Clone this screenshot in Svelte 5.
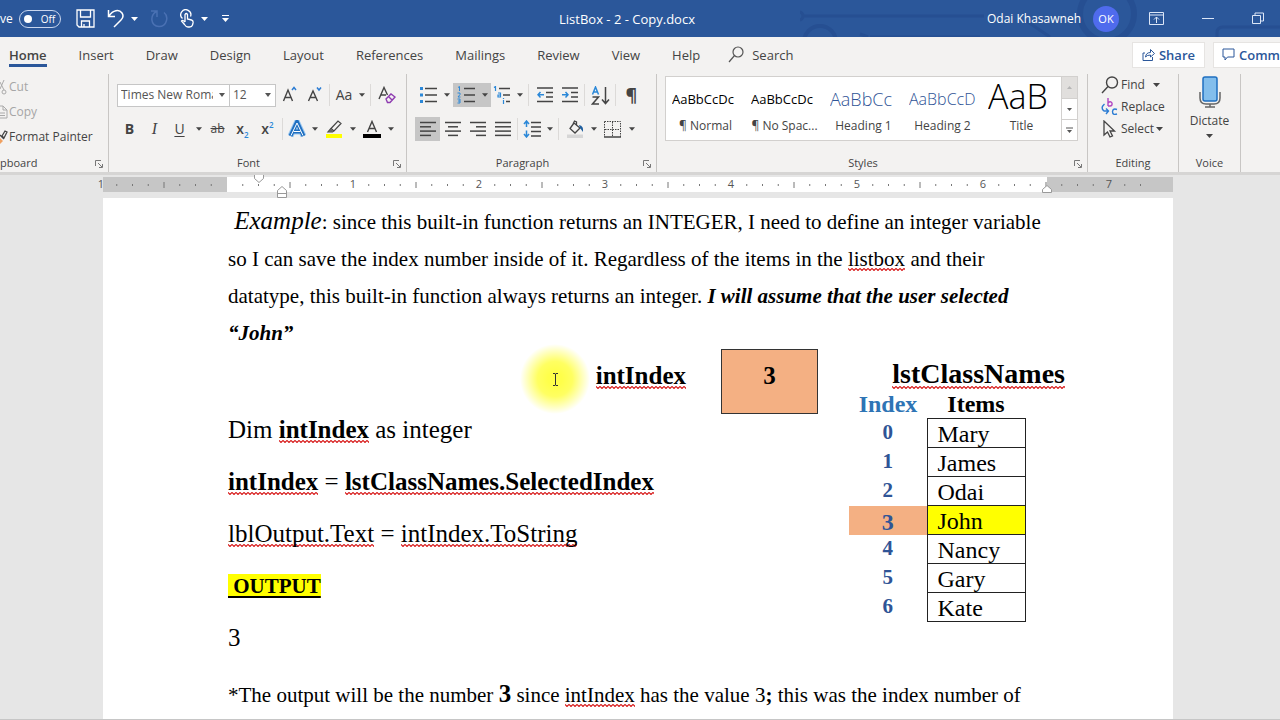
<script lang="ts">
  const tabs = ['Home', 'Insert', 'Draw', 'Design', 'Layout', 'References', 'Mailings', 'Review', 'View', 'Help'];

  const styles = [
    { sample: 'AaBbCcDc', label: '¶ Normal', kind: 'body' },
    { sample: 'AaBbCcDc', label: '¶ No Spac...', kind: 'body' },
    { sample: 'AaBbCc', label: 'Heading 1', kind: 'h1' },
    { sample: 'AaBbCcD', label: 'Heading 2', kind: 'h2' },
    { sample: 'AaB', label: 'Title', kind: 'title' }
  ];

  const names = ['Mary', 'James', 'Odai', 'John', 'Nancy', 'Gary', 'Kate'];
  const picked = 3;

  let activeTab = $state('Home');
  let autoSave = $state(false);

  // ruler: 126 units per inch, eight ticks per inch, zero at the left margin
  const inch = 126;
  const zero = 124;
  const marks = Array.from({ length: 66 }, (_, i) => i - 7).map((n) => ({
    n,
    x: zero + (n * inch) / 8
  }));
</script>

{#snippet caret()}
  <svg class="caret" width="7" height="4" viewBox="0 0 7 4" aria-hidden="true"><path d="M0 0h7L3.500 4z" fill="currentColor" /></svg>
{/snippet}

{#snippet menu(label: string)}
  <button type="button" class="drop" aria-label={label}>{@render caret()}</button>
{/snippet}

{#snippet lines(rows: number[][])}
  <svg width="18" height="16" viewBox="0 0 18 16" aria-hidden="true">
    {#each rows as [from, to], i}
      <path d="M{from} {1.5 + i * 4.300}H{to}" stroke="#444" stroke-width="1.500" />
    {/each}
  </svg>
{/snippet}

{#snippet caption(text: string, launcher: boolean)}
  <div class="caption" class:launches={launcher}>
    <span>{text}</span>
    {#if launcher}
      <button type="button" class="launcher" aria-label="{text} settings">
        <svg width="8" height="8" viewBox="0 0 8 8" fill="none" stroke="#777"><path d="M.5 6V.5H6M3 3l4 4M7.500 4v3.500H4" /></svg>
      </button>
    {/if}
  </div>
{/snippet}

<div class="app">
  <header class="titlebar">
    <svg class="circuit" width="480" height="37" viewBox="0 0 480 37" fill="none" stroke="#264f92" stroke-width="3" aria-hidden="true">
      <circle cx="-1" cy="16" r="4" /><path d="M4 16h180M70 37h110M60 34l8 3M225 20l25 17" />
      <circle cx="20" cy="42" r="16" stroke-width="4" />
      <circle cx="307" cy="14" r="27" stroke-width="6" />
      <path d="M417 37v-4q0-6 6-6h57" />
    </svg>
    <div class="quick">
      <label class="autosave">
        <span>ve</span>
        <input type="checkbox" bind:checked={autoSave} />
        <span class="toggle"><i></i>{autoSave ? 'On' : 'Off'}</span>
      </label>
      <button type="button" aria-label="Save">
        <svg width="19" height="19" viewBox="0 0 19 19" fill="none" stroke="#fff" stroke-width="1.300"><path d="M1 1h17v17H3l-2-2zM4.500 1v7h10V1M5.500 18v-6h8v6M8 18v-3" /></svg>
      </button>
      <button type="button" aria-label="Undo">
        <svg width="18" height="19" viewBox="0 0 18 19" fill="none" stroke="#fff" stroke-width="1.500"><path d="M1.500 1v6.500H8M2 7C6 1 12 0 15 4c2 3 1 5-1 7l-7 7" /></svg>
      </button>
      <button type="button" class="thin" aria-label="Undo history">{@render caret()}</button>
      <button type="button" aria-label="Redo">
        <svg width="18" height="19" viewBox="0 0 18 19" fill="none" stroke="#4a71b3" stroke-width="1.500"><path d="M1 2h6v6M6.500 2.500C0 6 0 17 9 17.500c8 0 10-10 5-14" /></svg>
      </button>
      <button type="button" aria-label="Touch mode">
        <svg width="15" height="19" viewBox="0 0 15 19" fill="none" stroke="#fff" stroke-width="1.300"><path d="M2.500 9.500A5 5 0 1 1 10.500 7.500M5 13V5.500q1.300-2 2.500 0V10l4 1q2 .5 1.500 3l-.5 2q-.5 2-3 2H8q-2 0-3.500-2.500L1.500 12q1-1.500 3.500 1" /></svg>
      </button>
      <button type="button" class="thin" aria-label="Touch mode options">{@render caret()}</button>
      <button type="button" class="more" aria-label="Customize toolbar">
        <svg width="7" height="7" viewBox="0 0 7 7"><path d="M0 .5h7" stroke="#fff" /><path d="M0 3h7L3.500 7z" fill="#fff" /></svg>
      </button>
    </div>
    <h1>ListBox - 2 - Copy.docx</h1>
    <div class="account">
      <span>Odai Khasawneh</span>
      <span class="avatar">OK</span>
      <button type="button" aria-label="Ribbon display options">
        <svg width="15" height="13" viewBox="0 0 15 13" fill="none" stroke="#dce6f7"><path d="M.5.5h14v12H.5zM.5 3h14M7.500 11V5M5 7.500L7.500 5 10 7.500" /></svg>
      </button>
      <button type="button" aria-label="Minimize">
        <svg width="12" height="13" viewBox="0 0 12 13" stroke="#dce6f7"><path d="M0 6.500h12" /></svg>
      </button>
      <button type="button" aria-label="Restore">
        <svg width="12" height="13" viewBox="0 0 12 13" fill="none" stroke="#dce6f7"><path d="M.5 3.500h8v8h-8zM3 3V1h8.500v8H9" /></svg>
      </button>
    </div>
  </header>

  <nav class="tabs">
    {#each tabs as tab}
      <button type="button" class:active={tab === activeTab} onclick={() => (activeTab = tab)}>{tab}</button>
    {/each}
    <button type="button" class="search">
      <svg width="16" height="17" viewBox="0 0 16 17" fill="none" stroke="#555" stroke-width="1.200"><circle cx="10" cy="6" r="5" /><path d="M6.500 9.500L1 16" /></svg>
      Search
    </button>
    <div class="collab">
      <button type="button">
        <svg width="13" height="13" viewBox="0 0 13 13" fill="none" stroke="#2b579a"><path d="M3 5H1v7.500h9.500V9M3.500 9Q4 4.500 8.500 4.500V1.500L12.500 5.500 8.500 9V7Q5 7 3.500 9z" /></svg>
        Share
      </button>
      <button type="button">
        <svg width="13" height="13" viewBox="0 0 13 13" fill="none" stroke="#2b579a"><path d="M1 1h11v8H5.500L3 12V9H1z" /></svg>
        Comm
      </button>
    </div>
  </nav>

  <section class="ribbon">
    <div class="group clipboard">
      <div class="stack">
        <button type="button" disabled>
          <svg width="9" height="16" viewBox="0 0 9 16" fill="none" stroke="#aaa"><path d="M4 1L0 10M0 3l4 8" /><circle cx="4" cy="13" r="2" /></svg>Cut
        </button>
        <button type="button" disabled>
          <svg width="9" height="16" viewBox="0 0 9 16" fill="none" stroke="#aaa"><path d="M0 2h3l4 4v8H0M3 2v4h4M0 9h5M0 11.500h5" /></svg>Copy
        </button>
        <button type="button">
          <svg width="9" height="16" viewBox="0 0 9 16" fill="none"><path d="M0 9l3 3-3 3z" fill="#f0a060" /><path d="M0 6l4 4M2 7l3-5 2 1-3 6z" stroke="#444" stroke-width="1.300" /></svg>Format Painter
        </button>
      </div>
      {@render caption('pboard', true)}
    </div>

    <div class="group font">
      <div class="rows">
        <div class="row">
          <select class="family" aria-label="Font">
            <option>Times New Roman</option>
          </select>
          <select class="size" aria-label="Font size">
            <option>12</option>
          </select>
          <button type="button" class="tool" aria-label="Grow font">
            <svg width="16" height="18" viewBox="0 0 16 18" fill="none"><path d="M1.500 15L6 4l4.500 11M3 11.500h6" stroke="#444" stroke-width="1.400" /><path d="M10 4l2-2.500L14 4" stroke="#2b7cd3" stroke-width="1.500" /></svg>
          </button>
          <button type="button" class="tool" aria-label="Shrink font">
            <svg width="16" height="18" viewBox="0 0 16 18" fill="none"><path d="M1.500 15L6 5l4.500 10M3 11.500h6" stroke="#444" stroke-width="1.400" /><path d="M10 1.500L12 4l2-2.500" stroke="#2b7cd3" stroke-width="1.500" /></svg>
          </button>
          <hr />
          <button type="button" class="tool narrow case">Aa</button>
          {@render menu('Change case')}
          <hr />
          <button type="button" class="tool" aria-label="Clear formatting">
            <svg width="18" height="18" viewBox="0 0 18 18" fill="none"><path d="M1 13L6 1.500 9.500 9M3 9h5" stroke="#444" stroke-width="1.400" /><path d="M8 13l5-5 4 3-5 5.500H9.500z M10.500 10.500l3.500 3.500" stroke="#8e3bb0" stroke-width="1.400" fill="#f3f2f1" /></svg>
          </button>
        </div>
        <div class="row">
          <button type="button" class="tool bold">B</button>
          <button type="button" class="tool italic">I</button>
          <button type="button" class="tool under">U</button>
          {@render menu('Underline styles')}
          <button type="button" class="tool strike">ab</button>
          <button type="button" class="tool script">x<sub>2</sub></button>
          <button type="button" class="tool script">x<sup>2</sup></button>
          <hr />
          <button type="button" class="tool narrow" aria-label="Text effects">
            <svg width="18" height="18" viewBox="0 0 18 18" fill="none"><path d="M2.500 16L9 2l6.500 14M5 11.500h8" stroke="#9cc8f0" stroke-width="6" /><path d="M2.500 16L9 2l6.500 14M5 11.500h8" stroke="#1f6fc0" stroke-width="4" /><path d="M3 15.500L9 3l6 12.500M5.500 11.500h7" stroke="#fff" /></svg>
          </button>
          {@render menu('Text effects options')}
          <button type="button" class="tool" aria-label="Highlight">
            <svg width="18" height="18" viewBox="0 0 18 18" fill="none"><path d="M1 14h16v4H1z" fill="#ffff00" /><path d="M6 8.500L13 1l3 2.500-7 7.500zM6 8.500L3 12h4.500l1.500-1.500" stroke="#444" stroke-width="1.200" /><path d="M3 12l3-3 2.500 2-1 1z" fill="#666" /></svg>
          </button>
          {@render menu('Highlight colors')}
          <button type="button" class="tool" aria-label="Font color">
            <svg width="18" height="18" viewBox="0 0 18 18"><path d="M0 14h18v4H0z" fill="#000" /><path d="M4.500 12L9 1.500 13.500 12M6 8.500h6" fill="none" stroke="#444" stroke-width="1.400" /></svg>
          </button>
          {@render menu('Font colors')}
        </div>
      </div>
      {@render caption('Font', true)}
    </div>

    <div class="group paragraph">
      <div class="rows">
        <div class="row">
          <button type="button" class="tool" aria-label="Bullets">
            <svg width="18" height="18" viewBox="0 0 18 18"><path d="M1 1h3v3H1zM1 7.500h3v3H1zM1 14h3v3H1z" fill="#2b88d8" /><path d="M6 2.500h12M6 9h12M6 15.500h12" stroke="#444" stroke-width="1.500" /></svg>
          </button>
          {@render menu('Bullet styles')}
          <span class="on">
            <button type="button" class="tool" aria-label="Numbering">
              <svg width="18" height="18" viewBox="0 0 18 18" fill="none"><path d="M1 1.500l1.500-1V5M.5 7h2.500v1.500L1 11h2.500M.5 13h2.500v4H.5M1 15h2" stroke="#2b88d8" /><path d="M7 2.500h11M7 9h11M7 15.500h11" stroke="#444" stroke-width="1.500" /></svg>
            </button>
            {@render menu('Numbering styles')}
          </span>
          <button type="button" class="tool narrow" aria-label="Multilevel list">
            <svg width="18" height="18" viewBox="0 0 18 18" fill="none"><path d="M1 1.500l1.500-1V5M5 7h2.500v4H5V9h2.500M10.500 12v1M10.500 14v4" stroke="#2b88d8" stroke-width="1.200" /><path d="M6 2.500h11M10 9h7M13 15.500h4" stroke="#444" stroke-width="1.500" /></svg>
          </button>
          {@render menu('Multilevel styles')}
          <hr />
          <button type="button" class="tool" aria-label="Decrease indent">
            <svg width="16" height="16" viewBox="0 0 16 16" fill="none"><path d="M0 1h16M9 5.500h7M9 10h7M0 14.500h16" stroke="#444" stroke-width="1.400" /><path d="M7 7.800H1M3.500 5L1 7.800l2.500 2.800" stroke="#2b88d8" stroke-width="1.500" /></svg>
          </button>
          <button type="button" class="tool" aria-label="Increase indent">
            <svg width="16" height="16" viewBox="0 0 16 16" fill="none"><path d="M0 1h16M9 5.500h7M9 10h7M0 14.500h16" stroke="#444" stroke-width="1.400" /><path d="M0 7.800h6M3.500 5L6 7.800l-2.500 2.800" stroke="#2b88d8" stroke-width="1.500" /></svg>
          </button>
          <hr />
          <button type="button" class="tool" aria-label="Sort">
            <svg width="19" height="19" viewBox="0 0 19 19" fill="none"><path d="M1.500 8.500L4.500 1l3 7.500M2.500 6h4" stroke="#2b88d8" stroke-width="1.500" /><path d="M1.500 11h6l-6 7h6.500M14.500 1v16M11 13.500l3.500 4 3.500-4" stroke="#444" stroke-width="1.500" /></svg>
          </button>
          <hr />
          <button type="button" class="tool pilcrow">¶</button>
        </div>
        <div class="row">
          <button type="button" class="tool on" aria-label="Align left">{@render lines([[1, 17], [1, 12], [1, 17], [1, 12]])}</button>
          <button type="button" class="tool" aria-label="Center">{@render lines([[1, 17], [4, 14], [1, 17], [4, 14]])}</button>
          <button type="button" class="tool" aria-label="Align right">{@render lines([[1, 17], [7, 17], [1, 17], [7, 17]])}</button>
          <button type="button" class="tool" aria-label="Justify">{@render lines([[1, 17], [1, 17], [1, 17], [1, 17]])}</button>
          <hr />
          <button type="button" class="tool narrow" aria-label="Line spacing">
            <svg width="18" height="18" viewBox="0 0 18 18" fill="none"><path d="M3.500 1v6M1 4l2.500-3L6 4M3.500 10.500v6M1 14l2.500 3L6 14" stroke="#2b88d8" stroke-width="1.500" /><path d="M8 2.500h10M8 7h10M8 11.500h10M8 16h10" stroke="#444" stroke-width="1.400" /></svg>
          </button>
          {@render menu('Line spacing options')}
          <hr />
          <button type="button" class="tool" aria-label="Shading">
            <svg width="18" height="18" viewBox="0 0 18 18" fill="none"><path d="M1 14.500h16V18H1z" fill="#d6d6d6" /><path d="M8 3l6 5-5 5-5-4.500zM7 4l1.500-3 2 1v4" stroke="#444" stroke-width="1.300" /><path d="M13 5q5 1 4 7l-3-4z" fill="#1f5f9f" /></svg>
          </button>
          {@render menu('Shading colors')}
          <button type="button" class="tool" aria-label="Borders">
            <svg width="17" height="17" viewBox="0 0 17 17" fill="none" stroke="#444"><path d="M.5.500h16v15.500M.5.500V16M8.500 1v15M1 8.500h15" stroke-dasharray="1.500 1" /><path d="M0 16h17" stroke-width="1.500" /></svg>
          </button>
          {@render menu('Border styles')}
        </div>
      </div>
      {@render caption('Paragraph', true)}
    </div>

    <div class="group styles">
      <div class="gallery">
        {#each styles as style}
          <button type="button" class="style">
            <span class="sample {style.kind}">{style.sample}</span>
            <span class="label">{style.label}</span>
          </button>
        {/each}
        <div class="scroller">
          <button type="button" aria-label="Previous styles" disabled>
            <svg width="5" height="3" viewBox="0 0 5 3"><path d="M0 3L2.500 0 5 3z" fill="#b5b5b5" /></svg>
          </button>
          <button type="button" aria-label="Next styles">
            <svg width="5" height="3" viewBox="0 0 5 3"><path d="M0 0h5L2.500 3z" fill="#555" /></svg>
          </button>
          <button type="button" aria-label="More styles">
            <svg width="7" height="7" viewBox="0 0 7 7"><path d="M0 1h7" stroke="#555" /><path d="M1 3h5L3.500 6z" fill="#555" /></svg>
          </button>
        </div>
      </div>
      {@render caption('Styles', true)}
    </div>

    <div class="group editing">
      <div class="stack">
        <button type="button">
          <svg width="18" height="18" viewBox="0 0 18 18" fill="none" stroke="#444" stroke-width="1.400"><circle cx="11" cy="6.500" r="5.500" /><path d="M7 10.500L1 17" /></svg>Find<i>{@render caret()}</i>
        </button>
        <button type="button">
          <svg width="18" height="18" viewBox="0 0 18 18" fill="none" stroke-width="1.400"><path d="M7 0v8M7 5q2.500-2.500 4 0 .5 3-2 3H7" stroke="#b146c2" /><path d="M3.500 6Q-1 10 3 13h4M5 10.500L7.500 13 5 16M16 11.500q-4-1.500-4.500 2 0 4 4.500 2.500" stroke="#2b7cd3" /></svg>Replace
        </button>
        <button type="button">
          <svg width="18" height="18" viewBox="0 0 18 18" fill="none" stroke="#444" stroke-width="1.300"><path d="M3 1v14l3.500-3L9 17l2.500-1L9 11h4.500z" /></svg>Select{@render caret()}
        </button>
      </div>
      {@render caption('Editing', false)}
    </div>

    <div class="group voice">
      <button type="button" class="dictate">
        <svg width="22" height="32" viewBox="0 0 22 32" fill="none"><path d="M1 16v6q0 6 6 6h8q6 0 6-6v-6M11 28v3M6 31h10" stroke="#666" stroke-width="1.500" /><rect x="4" y="1" width="14" height="24" rx="2" fill="#83beec" stroke="#1f6fc0" stroke-width="1.500" /></svg>
        Dictate
        {@render caret()}
      </button>
      {@render caption('Voice', false)}
    </div>
  </section>

  <main>
    <svg class="ruler" width="1070" height="24" viewBox="0 0 1070 24" aria-hidden="true">
      <rect y="3" width="124" height="15" fill="#c6c6c6" />
      <rect x="124" y="3" width="820" height="15" fill="#fff" />
      <rect x="944" y="3" width="126" height="15" fill="#c6c6c6" />
      {#each marks as mark}
        {#if mark.n % 8 === 0}
          {#if mark.n !== 0}
            <text x={mark.x} y="14" text-anchor="middle">{mark.n / 8}</text>
          {/if}
        {:else if mark.n % 4 === 0}
          <path d="M{mark.x} 8v6" stroke="#777" />
        {:else}
          <path d="M{mark.x} 10v2" stroke="#777" />
        {/if}
      {/each}
      <text x="-2" y="14" text-anchor="middle">1</text>
      <g fill="#fff" stroke="#999">
        <path d="M151.500 .5h9v4l-4.500 4-4.500-4z" />
        <path d="M174.500 23.500v-7l4.500-4 4.500 4v7zM174.500 19.500h9" />
        <path d="M939.500 18.500v-3l4.500-4 4.500 4v3z" />
      </g>
    </svg>

    <article class="page">
      <p class="intro">
        <em>&nbsp;Example</em>: since this built-in function returns an INTEGER, I need to define an integer variable<br />
        so I can save the index number inside of it. Regardless of the items in the <span class="typo">listbox</span> and their<br />
        datatype, this built-in function always returns an integer. <strong><i>I will assume that the user selected<br />
        “John”</i></strong>
      </p>

      <div class="spread">
        <div class="code">
          <div class="variable">
            <strong class="typo">intIndex</strong>
            <strong class="value">{picked}</strong>
          </div>
          <p>Dim <strong class="typo">intIndex</strong> as integer</p>
          <p><strong class="typo">intIndex</strong> = <strong class="typo">lstClassNames.SelectedIndex</strong></p>
          <p><span class="typo">lblOutput.Text</span> = <span class="typo">intIndex.ToString</span></p>
          <p class="output"><mark>&nbsp;OUTPUT</mark></p>
          <p>{picked}</p>
        </div>

        <div class="list">
          <h2><span class="typo">lstClassNames</span></h2>
          <table>
            <thead>
              <tr><th class="index">Index</th><th>Items</th></tr>
            </thead>
            <tbody>
              {#each names as name, i}
                <tr class:picked={i === picked}>
                  <th scope="row">{i}</th>
                  <td>{name}</td>
                </tr>
              {/each}
            </tbody>
          </table>
        </div>
      </div>

      <p class="note">
        *The output will be the number <strong class="big">{picked}</strong> since <span class="typo">intIndex</span> has the value 3<strong>;</strong> this was the index number of
      </p>

      <div class="pointer">
        <svg width="7" height="13" viewBox="0 0 7 13" fill="none" stroke="#333"><path d="M1 .5h2l.5.5.5-.5h2M3.500 1v11M1 12.500h2l.5-.5.5.5h2" /></svg>
      </div>
    </article>
  </main>
</div>

<style>
  :global(body) {
    margin: 0;
  }

  .app {
    display: flex;
    flex-direction: column;
    height: 100vh;
    overflow: hidden;
    background: #e6e6e6;
    color: #444;
    font: 12px/16px 'Open Sans', 'Noto Sans', sans-serif;
  }

  button {
    border: 0;
    padding: 0;
    background: none;
    color: inherit;
    font: inherit;
  }

  svg {
    display: block;
    flex: none;
  }

  /* title bar */
  .titlebar {
    position: relative;
    flex: none;
    display: grid;
    grid-template-columns: 1fr auto 1fr;
    align-items: center;
    height: 37px;
    background: #2b579a;
    color: #fff;
  }

  .circuit {
    position: absolute;
    top: 0;
    right: 0;
  }

  .quick,
  .account {
    position: relative;
    display: flex;
    align-items: center;
  }

  .quick {
    gap: 12px;
  }

  .quick .thin {
    margin-left: -6px;
  }

  .quick .more {
    margin-left: 2px;
  }

  .autosave {
    position: relative;
    display: flex;
    align-items: center;
    gap: 6px;
    margin-right: 3px;
  }

  .autosave input {
    position: absolute;
    opacity: 0;
  }

  .toggle {
    display: flex;
    align-items: center;
    gap: 9px;
    box-sizing: border-box;
    width: 42px;
    height: 18px;
    padding-left: 4px;
    border: 1px solid #c9d6ee;
    border-radius: 9px;
    font-size: 10px;
  }

  .toggle i {
    width: 8px;
    height: 8px;
    border-radius: 50%;
    background: #fff;
  }

  h1 {
    position: relative;
    margin: 0;
    padding-right: 26px;
    font-size: 13px;
    font-weight: 400;
  }

  .account {
    justify-content: flex-end;
    padding-right: 16px;
  }

  .avatar {
    display: grid;
    place-items: center;
    width: 26px;
    height: 26px;
    margin: 0 30px 0 12px;
    border-radius: 50%;
    background: #4f6bed;
    font-size: 11px;
  }

  .account button + button {
    margin-left: 38px;
  }

  /* tabs */
  .tabs {
    flex: none;
    display: flex;
    align-items: center;
    gap: 32px;
    height: 35px;
    padding-left: 9px;
    background: #f3f2f1;
    font-size: 13px;
    white-space: nowrap;
  }

  .tabs > button {
    padding-top: 3px;
    border-bottom: 3px solid transparent;
    line-height: 18px;
  }

  .tabs > .active {
    border-color: #2b579a;
    font-weight: 600;
  }

  .tabs .search {
    display: flex;
    gap: 8px;
    margin-left: -4px;
  }

  .collab {
    display: flex;
    gap: 8px;
    margin-left: auto;
  }

  .collab button {
    display: flex;
    align-items: center;
    gap: 4px;
    height: 26px;
    padding: 0 9px;
    border: 1px solid #e6e4e2;
    background: #fff;
    color: #2b579a;
    font-weight: 600;
  }

  .collab button:last-child {
    padding: 0 0 0 8px;
    border-right: 0;
  }

  /* ribbon */
  .ribbon {
    flex: none;
    display: flex;
    height: 100px;
    border-bottom: 3px solid #d6d5d4;
    background: #f3f2f1;
  }

  .group {
    display: flex;
    flex-direction: column;
    justify-content: space-between;
    box-sizing: border-box;
    margin-top: 2px;
    border-right: 1px solid #c8c6c4;
    height: 98px;
  }

  .clipboard {
    width: 109px;
  }

  .font {
    width: 298px;
  }

  .paragraph {
    width: 250px;
  }

  .styles {
    width: 431px;
  }

  .editing {
    width: 91px;
  }

  .voice {
    width: 62px;
  }

  .caption {
    position: relative;
    padding-bottom: 1px;
    font-size: 11px;
    text-align: center;
  }

  .launches {
    padding-right: 18px;
  }

  .clipboard .caption {
    text-align: left;
  }

  .launcher {
    position: absolute;
    right: 5px;
    top: 5px;
  }

  .stack {
    display: grid;
    grid-auto-rows: 25px;
  }

  .stack button {
    display: flex;
    align-items: center;
  }

  .stack i {
    margin-left: 6px;
  }

  .stack button:disabled {
    color: #a6a6a6;
  }

  .editing .stack {
    grid-auto-rows: 22px;
    padding-left: 13px;
  }

  .editing button {
    gap: 2px;
  }

  .rows {
    display: grid;
    gap: 10px;
    padding: 9px 0 0 8px;
  }

  .row,
  .on {
    display: flex;
    align-items: center;
    height: 24px;
  }

  .tool {
    display: grid;
    place-items: center;
    flex: none;
    width: 25px;
    height: 24px;
    font-size: 14px;
  }

  .narrow {
    width: 22px;
  }

  .drop {
    display: grid;
    place-items: center;
    width: 13px;
    height: 24px;
  }

  .drop .caret {
    width: 6px;
  }

  .on {
    background: #c6c6c6;
  }

  .tool.on {
    display: grid;
  }

  .row hr {
    width: 1px;
    height: 22px;
    margin: 0 3px 0 2px;
    border: 0;
    background: #dcdad8;
  }

  select {
    appearance: none;
    box-sizing: border-box;
    height: 23px;
    padding: 0 16px 0 3px;
    border: 1px solid #c6c6c6;
    border-radius: 0;
    background: #fff url("data:image/svg+xml,%3Csvg xmlns='http://www.w3.org/2000/svg' width='6' height='4'%3E%3Cpath d='M0 0h6L3 4z' fill='%23555'/%3E%3C/svg%3E") no-repeat right 4px center;
    color: #555;
    font: inherit;
  }

  .family {
    width: 113px;
  }

  .size {
    width: 47px;
    margin: 0 1px 0 -1px;
  }

  .bold {
    font-weight: 700;
  }

  .italic {
    font-family: 'Liberation Serif', serif;
    font-size: 16px;
    font-style: italic;
  }

  .under {
    text-decoration: underline;
    text-underline-offset: 2px;
  }

  .strike {
    font-size: 12px;
    text-decoration: line-through;
  }

  .script {
    display: block;
    font-weight: 600;
  }

  .script sub,
  .script sup {
    color: #2b88d8;
    font-size: 8px;
    line-height: 1px;
  }

  .pilcrow {
    font-size: 18px;
    font-weight: 700;
  }

  .gallery {
    display: flex;
    box-sizing: border-box;
    height: 65px;
    margin: 2px 9px 0 8px;
    border: 1px solid #d2d0ce;
    background: #fff;
  }

  .style {
    display: flex;
    flex: 1;
    flex-direction: column;
    gap: 3px;
    min-width: 0;
    padding: 0 6px;
  }

  .style span {
    width: 100%;
    overflow-x: clip;
    white-space: nowrap;
  }

  .sample {
    height: 38px;
    color: #000;
    line-height: 44px;
    text-align: left;
  }

  .sample.body {
    font-size: 13px;
  }

  .sample.h1 {
    color: #2f5496;
    font-size: 18px;
    font-weight: 300;
  }

  .sample.h2 {
    color: #2f5496;
    font-size: 16px;
    font-weight: 300;
  }

  .sample.title {
    font-size: 34px;
    font-weight: 300;
    line-height: 38px;
  }

  .scroller {
    display: grid;
    grid-template-rows: 1fr 1fr 1fr;
    width: 16px;
  }

  .scroller button {
    display: grid;
    place-items: center;
    border-left: 1px solid #d2d0ce;
  }

  .scroller button + button {
    border-top: 1px solid #d2d0ce;
  }

  .scroller button:disabled {
    background: #e1dfdd;
  }

  .dictate {
    display: flex;
    flex-direction: column;
    align-items: center;
    gap: 5px;
    padding-top: 2px;
  }

  /* document */
  main {
    flex: 1;
    min-height: 0;
    display: flex;
    flex-direction: column;
    align-items: center;
    padding-right: 4px;
    overflow: hidden;
    border-bottom: 1px solid #c6c6c6;
  }

  .ruler {
    overflow: visible;
    margin-top: -1px;
    font-size: 11px;
  }

  .ruler text {
    fill: #555;
  }

  .page {
    position: relative;
    flex: 1;
    box-sizing: border-box;
    width: 100%;
    max-width: 1070px;
    padding: 4px 108px 0 125px;
    background: #fff;
    color: #000;
    font: 25px/32px 'Liberation Serif', 'Times New Roman', serif;
  }

  .page p {
    margin: 0;
  }

  .typo {
    background: url("data:image/svg+xml,%3Csvg xmlns='http://www.w3.org/2000/svg' width='4' height='3'%3E%3Cpath d='M-1 1.500l1-1 2 2 2-2 1 1' fill='none' stroke='%23d81e1e' stroke-width='1.200'/%3E%3C/svg%3E") repeat-x left bottom;
  }

  .page .intro {
    font-size: 21px;
    line-height: 37px;
    white-space: nowrap;
  }

  .intro em {
    font-size: 25px;
  }

  .spread {
    display: flex;
    margin-top: -3px;
  }

  .code {
    flex: 1;
    display: flex;
    flex-direction: column;
    gap: 20px;
  }

  .variable {
    display: flex;
    justify-content: flex-end;
    align-items: flex-start;
    gap: 35px;
    height: 65px;
    margin: 0 31px -20px 0;
    line-height: 27px;
  }

  .variable .typo {
    margin-top: 13px;
  }

  .value {
    box-sizing: border-box;
    width: 97px;
    height: 65px;
    padding-top: 12px;
    border: 1px solid #333;
    background: #f4b083;
    text-align: center;
  }

  .page .output {
    font-size: 21px;
    font-weight: 700;
  }

  mark {
    background: #ff0;
    text-decoration: underline;
    text-decoration-thickness: 2px;
    text-underline-offset: 3px;
  }

  .list {
    width: 216px;
    padding-top: 9px;
  }

  h2 {
    margin: 0;
    font-size: 28px;
    line-height: 32px;
    text-align: right;
  }

  table {
    border-collapse: collapse;
    font-size: 24px;
    line-height: 28px;
  }

  th,
  td {
    box-sizing: border-box;
    height: 29px;
    padding: 0;
  }

  thead th {
    width: 98px;
    height: 28px;
  }

  thead .index {
    width: 78px;
    color: #2e74b5;
  }

  tbody th {
    color: #2f5496;
    font-size: 21px;
    line-height: 26px;
    vertical-align: top;
  }

  td {
    padding: 2px 0 0 10px;
    border: 1px solid #222;
    line-height: 26px;
  }

  .picked th {
    background: #f4b083;
    font-size: 24px;
    vertical-align: bottom;
  }

  .picked td {
    background: #ff0;
  }

  .page .note {
    margin-top: 24px;
    font-size: 21px;
    white-space: nowrap;
  }

  .big {
    font-size: 25px;
  }

  .pointer {
    position: absolute;
    top: 146px;
    left: 417px;
    display: grid;
    place-items: center;
    width: 70px;
    height: 70px;
    border-radius: 50%;
    background: radial-gradient(closest-side, #ffff4a 20%, rgba(255, 255, 70, 0.85) 50%, rgba(255, 255, 160, 0));
  }
</style>
